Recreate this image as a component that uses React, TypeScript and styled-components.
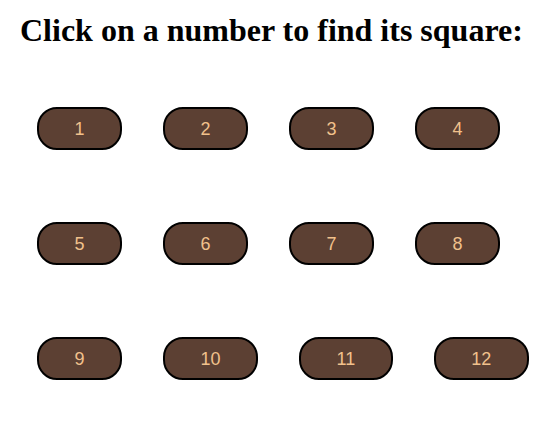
import React from "react";
import styled, { createGlobalStyle } from "styled-components";

const GlobalStyle = createGlobalStyle`
  html, body {
    margin: 0;
    padding: 0;
    background: #ffffff;
  }
  body {
    font-family: "Liberation Serif", "Times New Roman", serif;
  }
`;

const Page = styled.div`
  display: flex;
  flex-direction: column;
  width: 554px;
`;

const Title = styled.h1`
  margin: 0;
  padding: 12px 0 0 20px;
  font-family: "Liberation Serif", "Times New Roman", serif;
  font-size: 32px;
  font-weight: bold;
  line-height: 36px;
  color: #000000;
`;

const Grid = styled.div`
  display: flex;
  flex-direction: column;
  gap: 72px;
  margin-top: 59px;
  padding-left: 37px;
`;

const Row = styled.div`
  display: flex;
  gap: 41px;
`;

const NumberButton = styled.button`
  box-sizing: border-box;
  height: 43px;
  padding: 0 35.5px;
  border: 2px solid #000000;
  border-radius: 20px;
  background: #5c4033;
  color: #f1c18c;
  font-family: "Liberation Sans", Arial, sans-serif;
  font-size: 18px;
  line-height: 20px;
  cursor: pointer;
`;

const rows = [
  [1, 2, 3, 4],
  [5, 6, 7, 8],
  [9, 10, 11, 12],
];

export default function App() {
  return (
    <>
      <GlobalStyle />
      <Page>
        <Title>Click on a number to find its square:</Title>
        <Grid>
          {rows.map((row, i) => (
            <Row key={i}>
              {row.map((n) => (
                <NumberButton key={n} onClick={() => alert(`${n} squared is ${n * n}`)}>
                  {n}
                </NumberButton>
              ))}
            </Row>
          ))}
        </Grid>
      </Page>
    </>
  );
}
